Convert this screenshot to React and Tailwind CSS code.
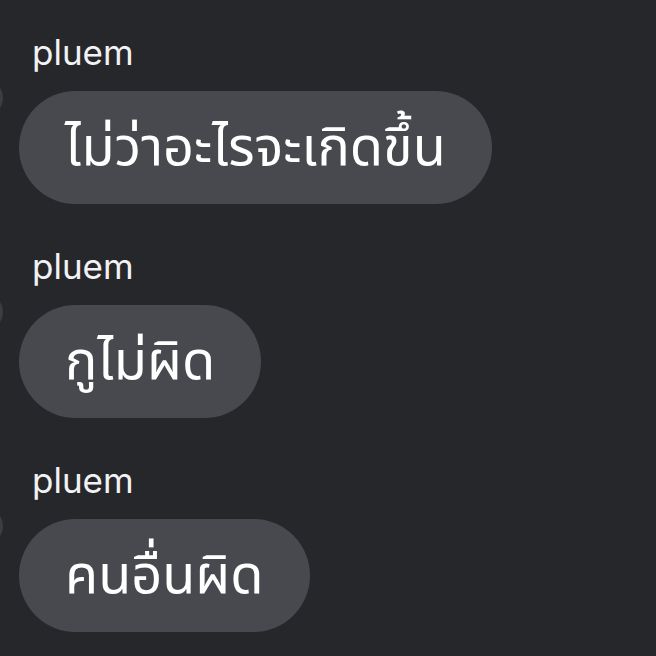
import React from "react";

const messages = [
  { id: 1, sender: "pluem", text: "ไม่ว่าอะไรจะเกิดขึ้น" },
  { id: 2, sender: "pluem", text: "กูไม่ผิด" },
  { id: 3, sender: "pluem", text: "คนอื่นผิด" },
];

const MessageGroup = ({ sender, text }) => {
  return (
    <div className="relative flex flex-col items-start">
      <div className="h-[42px] pl-[13px] text-[35px] leading-[32px] text-[#f2f2f4]">
        {sender}
      </div>
      {/* edge of avatar, mostly off screen */}
      <div className="absolute left-[-52px] top-[44px] h-[36px] w-[36px] rounded-full bg-[#3c3d42]" />
      <div className="mt-[13px] flex h-[113px] items-center rounded-full bg-[#48494e] px-[46px] pb-[4px] text-[54px] leading-none text-white">
        {text}
      </div>
    </div>
  );
};

export default function App() {
  return (
    <div
      className="h-[656px] w-[656px] overflow-hidden bg-[#26272b] pl-[19px] pt-[36px]"
      style={{ fontFamily: 'Inter, "Noto Sans", "Noto Sans Thai", sans-serif' }}
    >
      <div className="flex flex-col gap-[46px]">
        {messages.map((m) => (
          <MessageGroup key={m.id} sender={m.sender} text={m.text} />
        ))}
      </div>
    </div>
  );
}
